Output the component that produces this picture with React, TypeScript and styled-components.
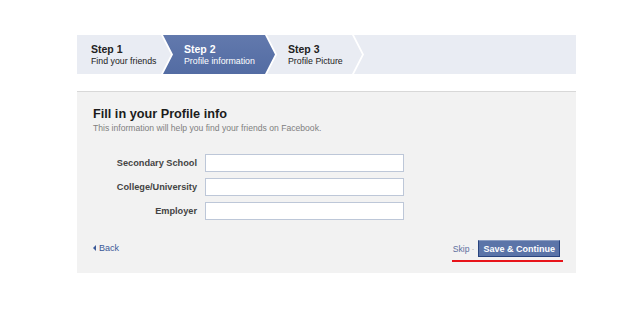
import styled, { createGlobalStyle } from "styled-components";

const GlobalStyle = createGlobalStyle`
    body {
        margin: 0;
        background: #fff;
        font-family: "Liberation Sans", Arial, sans-serif;
    }
`;

type StepShape = "first" | "middle" | "last";

const shapes: Record<StepShape, string> = {
    first: "polygon(0 0, calc(100% - 10px) 0, 100% 50%, calc(100% - 10px) 100%, 0 100%)",
    middle: "polygon(0 0, calc(100% - 10px) 0, 100% 50%, calc(100% - 10px) 100%, 0 100%, 10px 50%)",
    last: "polygon(0 0, 100% 0, 100% 100%, 0 100%, 10px 50%)",
};

const steps = [
    { title: "Step 1", sub: "Find your friends", width: 94 },
    { title: "Step 2", sub: "Profile information", width: 112, active: true },
    { title: "Step 3", sub: "Profile Picture", width: 95 },
];

const fields = ["Secondary School", "College/University", "Employer"];

function App() {
    return (
        <Page>
            <GlobalStyle />
            <StepBar>
                {steps.map((step, i) => (
                    <Step
                        key={step.title}
                        $shape={i === 0 ? "first" : "middle"}
                        $active={!!step.active}
                        $width={step.width}
                    >
                        <StepTitle>{step.title}</StepTitle>
                        <StepSub>{step.sub}</StepSub>
                    </Step>
                ))}
                <Step $shape="last" $active={false} />
            </StepBar>

            <Panel>
                <Title>Fill in your Profile info</Title>
                <Subtitle>This information will help you find your friends on Facebook.</Subtitle>

                <Form>
                    {fields.map((field) => (
                        <FieldRow key={field}>
                            <Label>{field}</Label>
                            <TextInput type="text" />
                        </FieldRow>
                    ))}
                </Form>

                <Footer>
                    <BackLink>
                        <svg width="3" height="6" viewBox="0 0 3 6">
                            <path d="M3 0 L0 3 L3 6 Z" fill="#3b5998" />
                        </svg>
                        Back
                    </BackLink>
                    <Actions>
                        <SkipLink>Skip</SkipLink>
                        <Dot>·</Dot>
                        <SaveButton>Save &amp; Continue</SaveButton>
                    </Actions>
                </Footer>
            </Panel>
        </Page>
    );
}

const Page = styled.div`
    width: 499px;
    padding: 35px 0 0 77px;
`;

const StepBar = styled.div`
    display: flex;
    height: 39px;
    background: #fff;
`;

const Step = styled.div<{ $shape: StepShape; $active: boolean; $width?: number }>`
    box-sizing: border-box;
    height: 100%;
    display: flex;
    flex-direction: column;
    padding: 8px 0 0 ${(p) => (p.$shape === "first" ? 14 : 21)}px;
    margin-left: ${(p) => (p.$shape === "first" ? 0 : -8)}px;
    ${(p) => (p.$width ? `width: ${p.$width}px; flex: none;` : "flex: 1;")}
    clip-path: ${(p) => shapes[p.$shape]};
    background: ${(p) => (p.$active ? "linear-gradient(#6279ad, #536ca3)" : "#e9ecf3")};
    color: ${(p) => (p.$active ? "#fff" : "#222")};
`;

const StepTitle = styled.div`
    font-size: 10.5px;
    font-weight: bold;
    line-height: 12px;
`;

const StepSub = styled.div`
    font-size: 8.8px;
    line-height: 12px;
    white-space: nowrap;
`;

const Panel = styled.div`
    margin-top: 17px;
    border-top: 1px solid #d8d8d8;
    background: #f2f2f2;
    padding: 15px 16px 11px;
`;

const Title = styled.h2`
    margin: 0;
    font-size: 12.7px;
    line-height: 15px;
    font-weight: bold;
    color: #1c1c1c;
`;

const Subtitle = styled.p`
    margin: 0;
    font-size: 8.6px;
    line-height: 12px;
    color: #808080;
`;

const Form = styled.div`
    display: flex;
    flex-direction: column;
    gap: 6px;
    margin-top: 20px;
`;

const FieldRow = styled.div`
    display: grid;
    grid-template-columns: 104px 199px;
    column-gap: 8px;
    align-items: center;
`;

const Label = styled.label`
    text-align: right;
    font-size: 9.2px;
    font-weight: bold;
    color: #444;
`;

const TextInput = styled.input`
    box-sizing: border-box;
    height: 18px;
    width: 199px;
    margin: 0;
    border: 1px solid #bdc7d8;
    background: #fff;
    padding: 0 3px;
`;

const Footer = styled.div`
    display: flex;
    justify-content: space-between;
    align-items: flex-start;
    margin-top: 20px;
`;

const BackLink = styled.a`
    display: flex;
    align-items: center;
    gap: 3px;
    margin-top: 2px;
    font-size: 9px;
    line-height: 12px;
    color: #3b5998;
    cursor: pointer;
`;

const Actions = styled.div`
    display: flex;
    align-items: center;
    margin-right: -3px;
    padding: 0 3px 3px 1px;
    border-bottom: 2px solid #e8141b;
`;

const SkipLink = styled.a`
    font-size: 8.6px;
    color: #5d6e9e;
    cursor: pointer;
`;

const Dot = styled.span`
    margin: 0 4px 0 2px;
    font-size: 9px;
    color: #aaa;
`;

const SaveButton = styled.button`
    box-sizing: border-box;
    height: 17px;
    padding: 0 4px;
    border: 1px solid #29447e;
    border-top-color: #8a9cc2;
    background: #5b74a8;
    color: #fff;
    font-family: "Liberation Sans", Arial, sans-serif;
    font-size: 9px;
    font-weight: bold;
    cursor: pointer;
`;

export default App;
